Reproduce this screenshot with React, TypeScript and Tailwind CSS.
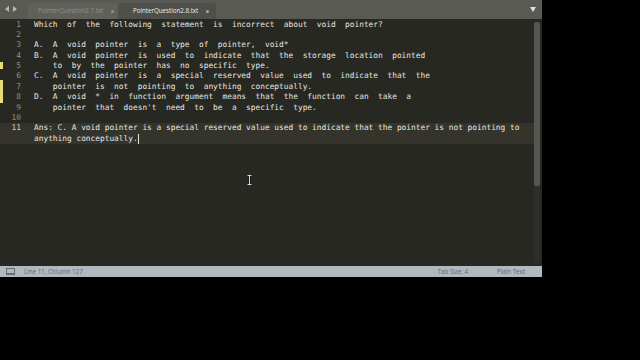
import React from "react";

const lines: { n: number; t: string }[] = [
  { n: 1, t: "Which  of  the  following  statement  is  incorrect  about  void  pointer?" },
  { n: 2, t: "" },
  { n: 3, t: "A.  A  void  pointer  is  a  type  of  pointer,  void*" },
  { n: 4, t: "B.  A  void  pointer  is  used  to  indicate  that  the  storage  location  pointed" },
  { n: 5, t: "    to  by  the  pointer  has  no  specific  type." },
  { n: 6, t: "C.  A  void  pointer  is  a  special  reserved  value  used  to  indicate  that  the" },
  { n: 7, t: "    pointer  is  not  pointing  to  anything  conceptually." },
  { n: 8, t: "D.  A  void  *  in  function  argument  means  that  the  function  can  take  a" },
  { n: 9, t: "    pointer  that  doesn't  need  to  be  a  specific  type." },
  { n: 10, t: "" },
];

export default function App() {
  const mono = { fontFamily: '"DejaVu Sans Mono", monospace' };
  return (
    <div className="w-[640px] h-[360px] bg-black overflow-hidden">
      <div className="w-[542px] h-[277px] flex flex-col">
        {/* Tab bar */}
        <div className="h-[19px] bg-[#5a5a55] relative flex items-end shrink-0" style={{ fontFamily: '"Open Sans", sans-serif' }}>
          <div className="absolute left-[5px] top-[6px] flex gap-[2px] text-[#b8b8b2]">
            <svg width="5" height="6" viewBox="0 0 5 6"><path d="M4 0 L0 3 L4 6 Z" fill="currentColor" /></svg>
            <svg width="5" height="6" viewBox="0 0 5 6"><path d="M1 0 L5 3 L1 6 Z" fill="currentColor" /></svg>
          </div>
          <div className="ml-[28px] w-[90px] h-[16px] bg-[#61615c] rounded-t-[4px] flex items-center pl-[10px] text-[6.2px] text-[#8f8f89]">
            <span>PointerQuestion2.7.txt</span>
            <span className="ml-[8px] w-[3px] h-[3px] rounded-full bg-[#8f8f89]" />
          </div>
          <div className="w-[98px] h-[16px] bg-[#50504b] rounded-t-[4px] flex items-center pl-[15px] text-[6.2px] text-[#ececE6]">
            <span>PointerQuestion2.8.txt</span>
            <span className="ml-[8px] w-[3px] h-[3px] rounded-full bg-[#a8a8a2]" />
          </div>
          <div className="absolute right-[6px] top-[7px]">
            <svg width="6" height="5" viewBox="0 0 6 5"><path d="M0 0 L6 0 L3 5 Z" fill="#e0e0da" /></svg>
          </div>
        </div>

        {/* Editor */}
        <div className="flex-1 bg-[#272822] flex relative overflow-hidden">
          {/* modified markers */}
          <div className="absolute left-0 top-[43px] w-[3px] h-[7px] bg-[#e8dc7a]" />
          <div className="absolute left-0 top-[61px] w-[3px] h-[23px] bg-[#e8dc7a]" />
          <div className="flex-1 pt-[0.5px] text-[7.84px] leading-[10.4px]" style={mono}>
            {lines.map((l) => (
              <div key={l.n} className="flex h-[10.4px]">
                <div className="w-[21px] text-right text-[#8f8f89]">{l.n}</div>
                <div className="ml-[13px] text-[#e6e6e0] whitespace-pre">{l.t}</div>
              </div>
            ))}
            <div className="flex bg-[#34342d]">
              <div className="w-[21px] text-right text-[#c8c8c2]">11</div>
              <div className="ml-[13px] text-[#e6e6e0] whitespace-pre">
                <div>Ans: C. A void pointer is a special reserved value used to indicate that the pointer is not pointing to</div>
                <div className="flex items-center">
                  <span>anything conceptually.</span>
                  <span className="inline-block w-[1px] h-[10px] bg-[#e6e6e0]" />
                </div>
              </div>
            </div>
          </div>
          {/* scrollbar */}
          <div className="w-[8px] py-[3px] pr-[2px] flex flex-col">
            <div className="flex-1 bg-[#2f2f2a] rounded-[2px] flex flex-col">
              <div className="h-[164px] bg-[#565650] rounded-[2px]" />
            </div>
          </div>
          {/* mouse I-beam */}
          <div className="absolute left-[247px] top-[156px]">
            <svg width="5" height="10" viewBox="0 0 5 10">
              <path d="M0.5 0.5 H4.5 M2.5 0.5 V9.5 M0.5 9.5 H4.5" stroke="#111" strokeWidth="2" fill="none" />
              <path d="M0.5 0.5 H4.5 M2.5 0.5 V9.5 M0.5 9.5 H4.5" stroke="#d8d8d2" strokeWidth="1" fill="none" />
            </svg>
          </div>
        </div>

        {/* Status bar */}
        <div className="h-[11px] bg-[#b3b8bf] flex items-center text-[6.2px] text-[#5f646b] shrink-0" style={{ fontFamily: '"Open Sans", sans-serif' }}>
          <svg className="ml-[6px]" width="9" height="7" viewBox="0 0 9 7">
            <rect x="0.5" y="0.5" width="8" height="5" fill="none" stroke="#6a6f76" />
            <rect x="0" y="5.5" width="9" height="1.5" fill="#6a6f76" />
          </svg>
          <span className="ml-[9px]">Line 11, Column 127</span>
          <span className="ml-auto">Tab Size: 4</span>
          <span className="ml-[29px] mr-[17px]">Plain Text</span>
        </div>
      </div>
    </div>
  );
}
